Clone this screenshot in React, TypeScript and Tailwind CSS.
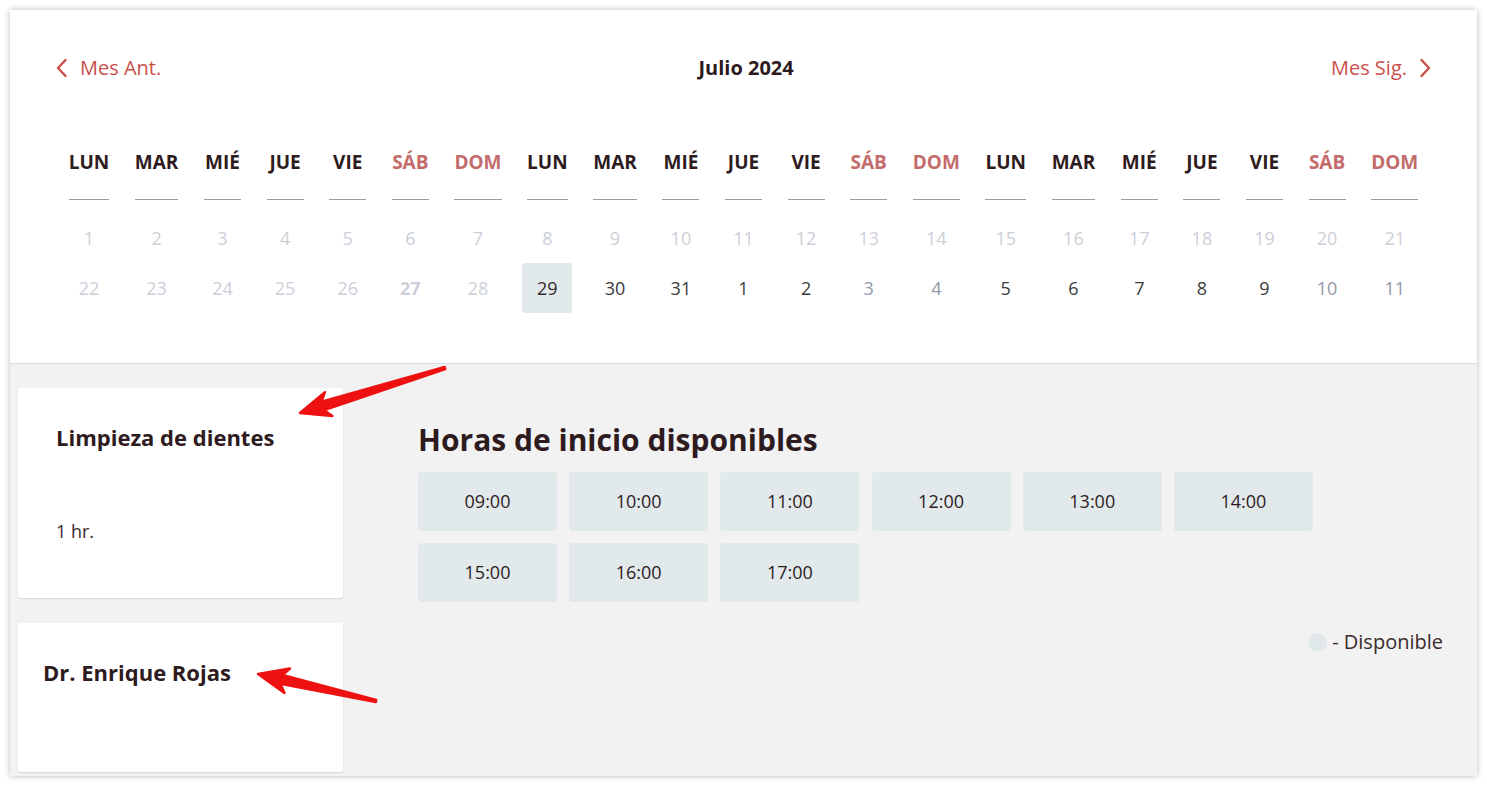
import React from "react";

const DOW = ["LUN", "MAR", "MIÉ", "JUE", "VIE", "SÁB", "DOM"];
const HEADERS = [...DOW, ...DOW, ...DOW];

type Day = { n: number; kind: "off" | "today" | "sel" | "on" | "wknd" };

const ROW1: Day[] = Array.from({ length: 21 }, (_, i) => ({ n: i + 1, kind: "off" }));
const ROW2: Day[] = [
  ...[22, 23, 24, 25, 26].map((n) => ({ n, kind: "off" as const })),
  { n: 27, kind: "today" },
  { n: 28, kind: "off" },
  { n: 29, kind: "sel" },
  { n: 30, kind: "on" },
  { n: 31, kind: "on" },
  { n: 1, kind: "on" },
  { n: 2, kind: "on" },
  { n: 3, kind: "wknd" },
  { n: 4, kind: "wknd" },
  { n: 5, kind: "on" },
  { n: 6, kind: "on" },
  { n: 7, kind: "on" },
  { n: 8, kind: "on" },
  { n: 9, kind: "on" },
  { n: 10, kind: "wknd" },
  { n: 11, kind: "wknd" },
];

const SLOTS = ["09:00", "10:00", "11:00", "12:00", "13:00", "14:00", "15:00", "16:00", "17:00"];

const dayCls: Record<Day["kind"], string> = {
  off: "text-[#cdcfd8]",
  today: "text-[#cdcfd8] font-bold",
  sel: "text-[#3a2a2c] bg-[#e2e9eb] rounded-[3px]",
  on: "text-[#3b3b3b]",
  wknd: "text-[#9298ab]",
};

function DayCell({ d }: { d: Day }) {
  return (
    <div className="h-[50px] w-0 flex items-center justify-center">
      <span className={`shrink-0 w-[50px] h-[50px] flex items-center justify-center text-[18px] ${dayCls[d.kind]}`}>{d.n}</span>
    </div>
  );
}

// annotation arrow (tip, tail in page px)
function Arrow({ tip, tail }: { tip: [number, number]; tail: [number, number] }) {
  const dx = tail[0] - tip[0], dy = tail[1] - tip[1];
  const len = Math.hypot(dx, dy);
  const u = [dx / len, dy / len];   // tip -> tail
  const n = [-u[1], u[0]];
  const p = (d: number, w: number) => `${tip[0] + u[0] * d + n[0] * w},${tip[1] + u[1] * d + n[1] * w}`;
  const pts = [p(0, 0), p(30, 12.5), p(24, 4.5), p(len, 1), p(len, -1), p(24, -4.5), p(30, -12.5)].join(" ");
  return <polygon points={pts} fill="#ee1111" stroke="#ee1111" strokeWidth={2.5} strokeLinejoin="round" />;
}

export default function App() {
  return (
    <div className="w-[1487px] h-[786px] bg-white relative overflow-hidden" style={{ fontFamily: '"Open Sans", "Noto Sans", sans-serif' }}>
      <div className="absolute left-[10px] top-[10px] w-[1467px] h-[766px] shadow-[0_0_6px_rgba(0,0,0,0.28)] flex flex-col overflow-hidden">
        {/* calendar */}
        <div className="bg-white pt-[44px] pb-[50px] border-b border-[#dcdcdc]">
          <div className="flex items-center justify-between px-[46px] h-[28px]">
            <button className="flex items-center gap-[12px] text-[20px] text-[#c9504b]">
              <svg width="12" height="20" viewBox="0 0 12 20" fill="none" stroke="currentColor" strokeWidth="2.4" strokeLinecap="round" strokeLinejoin="round"><path d="M9.5 2 L2 10 L9.5 18" /></svg>
              Mes Ant.
            </button>
            <span className="text-[20px] font-bold text-[#2e1b1e]">Julio 2024</span>
            <button className="flex items-center gap-[12px] text-[20px] text-[#c9504b]">
              Mes Sig.
              <svg width="12" height="20" viewBox="0 0 12 20" fill="none" stroke="currentColor" strokeWidth="2.4" strokeLinecap="round" strokeLinejoin="round"><path d="M2.5 2 L10 10 L2.5 18" /></svg>
            </button>
          </div>
          <div className="flex justify-center gap-[25.6px] mt-[67px]">
            {HEADERS.map((h, i) => (
              <div key={i} className="flex flex-col items-center">
                <div className={`min-w-[37px] text-center pb-[24px] border-b border-[#9e9e9e] text-[19px] leading-[26px] font-bold ${i % 7 >= 5 ? "text-[#c46b6b]" : "text-[#2e1b1e]"}`}>{h}</div>
                <div className="h-[13px]" />
                <DayCell d={ROW1[i]} />
                <DayCell d={ROW2[i]} />
              </div>
            ))}
          </div>
        </div>

        {/* lower */}
        <div className="flex-1 bg-[#f2f2f2] flex pl-[8px] pr-[34px] pt-[24px]">
          <div className="w-[325px] flex flex-col gap-[25px]">
            <div className="h-[210px] bg-white rounded-[3px] shadow-[0_1px_2px_rgba(0,0,0,0.12)] pt-[34px] px-[38px]">
              <div className="text-[22px] leading-[30px] font-bold text-[#2e1b1e]">Limpieza de dientes</div>
              <div className="mt-[66px] text-[18px] text-[#3a2a2c]">1 hr.</div>
            </div>
            <div className="h-[149px] bg-white rounded-[3px] shadow-[0_1px_2px_rgba(0,0,0,0.12)] pt-[34px] px-[25px]">
              <div className="text-[22px] leading-[30px] font-bold text-[#2e1b1e]">Dr. Enrique Rojas</div>
            </div>
          </div>
          <div className="flex-1 pl-[75px] pt-[33px] flex flex-col">
            <h2 className="text-[30px] leading-[38px] font-bold text-[#2e1b1e]">Horas de inicio disponibles</h2>
            <div className="mt-[13px] grid grid-cols-[repeat(6,139px)] gap-x-[12.2px] gap-y-[12px]">
              {SLOTS.map((s) => (
                <button key={s} className="h-[59px] bg-[#e2e9eb] rounded-[3px] text-[18px] text-[#2e1b1e]">{s}</button>
              ))}
            </div>
            <div className="mt-[25px] self-end flex items-center gap-[5px] text-[20px] text-[#3a2a2c]">
              <span className="w-[19px] h-[19px] rounded-full bg-[#e2e9eb]" />
              - Disponible
            </div>
          </div>
        </div>
      </div>

      <svg className="absolute inset-0 pointer-events-none" width="1487" height="786">
        <Arrow tip={[300, 413]} tail={[445, 368]} />
        <Arrow tip={[258, 674]} tail={[376, 701]} />
      </svg>
    </div>
  );
}
